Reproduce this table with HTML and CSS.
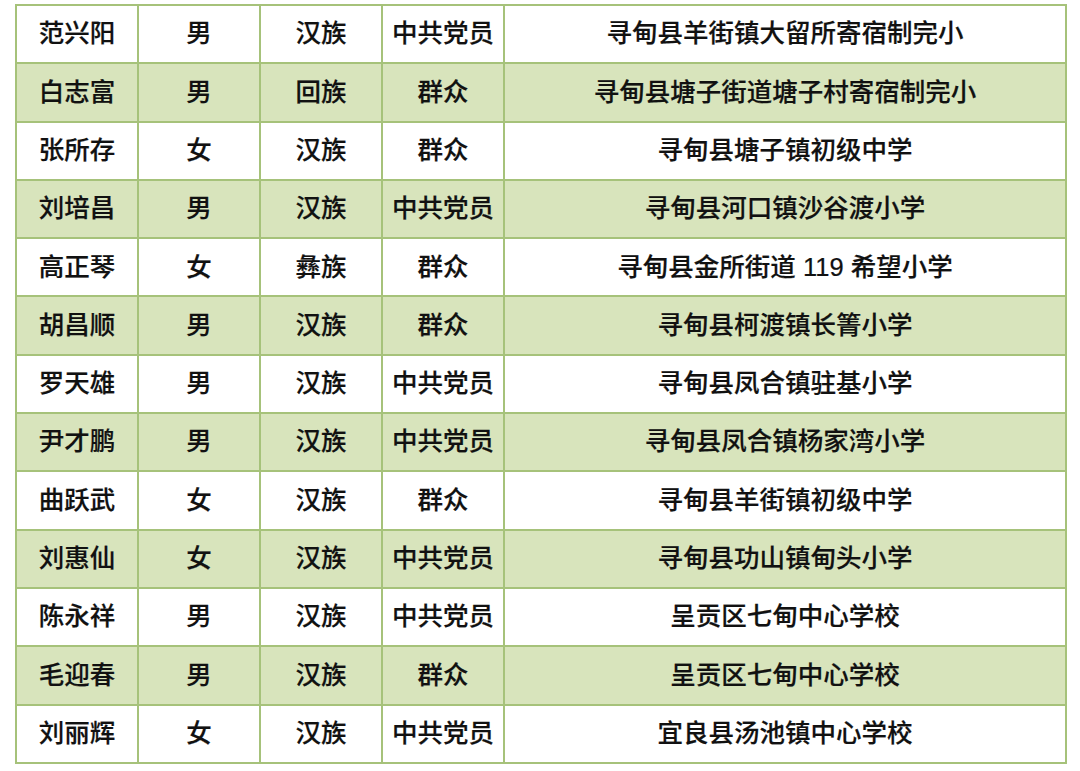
FILE: index.html
```html
<!DOCTYPE html>
<html lang="zh">
<head>
<meta charset="utf-8">
<link rel="stylesheet" href="styles.css">
</head>
<body>
<table class="roster">
<colgroup><col class="c1"><col class="c2"><col class="c3"><col class="c4"><col class="c5"></colgroup>
<tr><td>范兴阳</td><td>男</td><td>汉族</td><td>中共党员</td><td>寻甸县羊街镇大留所寄宿制完小</td></tr>
<tr class="alt"><td>白志富</td><td>男</td><td>回族</td><td>群众</td><td>寻甸县塘子街道塘子村寄宿制完小</td></tr>
<tr><td>张所存</td><td>女</td><td>汉族</td><td>群众</td><td>寻甸县塘子镇初级中学</td></tr>
<tr class="alt"><td>刘培昌</td><td>男</td><td>汉族</td><td>中共党员</td><td>寻甸县河口镇沙谷渡小学</td></tr>
<tr><td>高正琴</td><td>女</td><td>彝族</td><td>群众</td><td>寻甸县金所街道 119 希望小学</td></tr>
<tr class="alt"><td>胡昌顺</td><td>男</td><td>汉族</td><td>群众</td><td>寻甸县柯渡镇长箐小学</td></tr>
<tr><td>罗天雄</td><td>男</td><td>汉族</td><td>中共党员</td><td>寻甸县凤合镇驻基小学</td></tr>
<tr class="alt"><td>尹才鹏</td><td>男</td><td>汉族</td><td>中共党员</td><td>寻甸县凤合镇杨家湾小学</td></tr>
<tr><td>曲跃武</td><td>女</td><td>汉族</td><td>群众</td><td>寻甸县羊街镇初级中学</td></tr>
<tr class="alt"><td>刘惠仙</td><td>女</td><td>汉族</td><td>中共党员</td><td>寻甸县功山镇甸头小学</td></tr>
<tr><td>陈永祥</td><td>男</td><td>汉族</td><td>中共党员</td><td>呈贡区七甸中心学校</td></tr>
<tr class="alt"><td>毛迎春</td><td>男</td><td>汉族</td><td>群众</td><td>呈贡区七甸中心学校</td></tr>
<tr><td>刘丽辉</td><td>女</td><td>汉族</td><td>中共党员</td><td>宜良县汤池镇中心学校</td></tr>
</table>
</body>
</html>
```
FILE: styles.css
```css
html, body {
  margin: 0;
  padding: 0;
  background: #ffffff;
}
body {
  padding: 4px 0 0 15px;
}
.roster {
  border-collapse: collapse;
  width: 1050px;
  table-layout: fixed;
  font-family: "Liberation Sans", "Noto Sans CJK SC", sans-serif;
  font-size: 25.5px;
  font-weight: 500;
  -webkit-text-stroke: 0.2px #111111;
  color: #111111;
}
.c1, .c2, .c3, .c4 { width: 122px; }
.c5 { width: 562px; }
.roster td {
  border: 2px solid #a6c27a;
  height: 58.3px;
  padding: 0;
  text-align: center;
  vertical-align: middle;
  line-height: 1;
  box-sizing: border-box;
}
.roster tr.alt td {
  background: #d8e4bc;
}
```
